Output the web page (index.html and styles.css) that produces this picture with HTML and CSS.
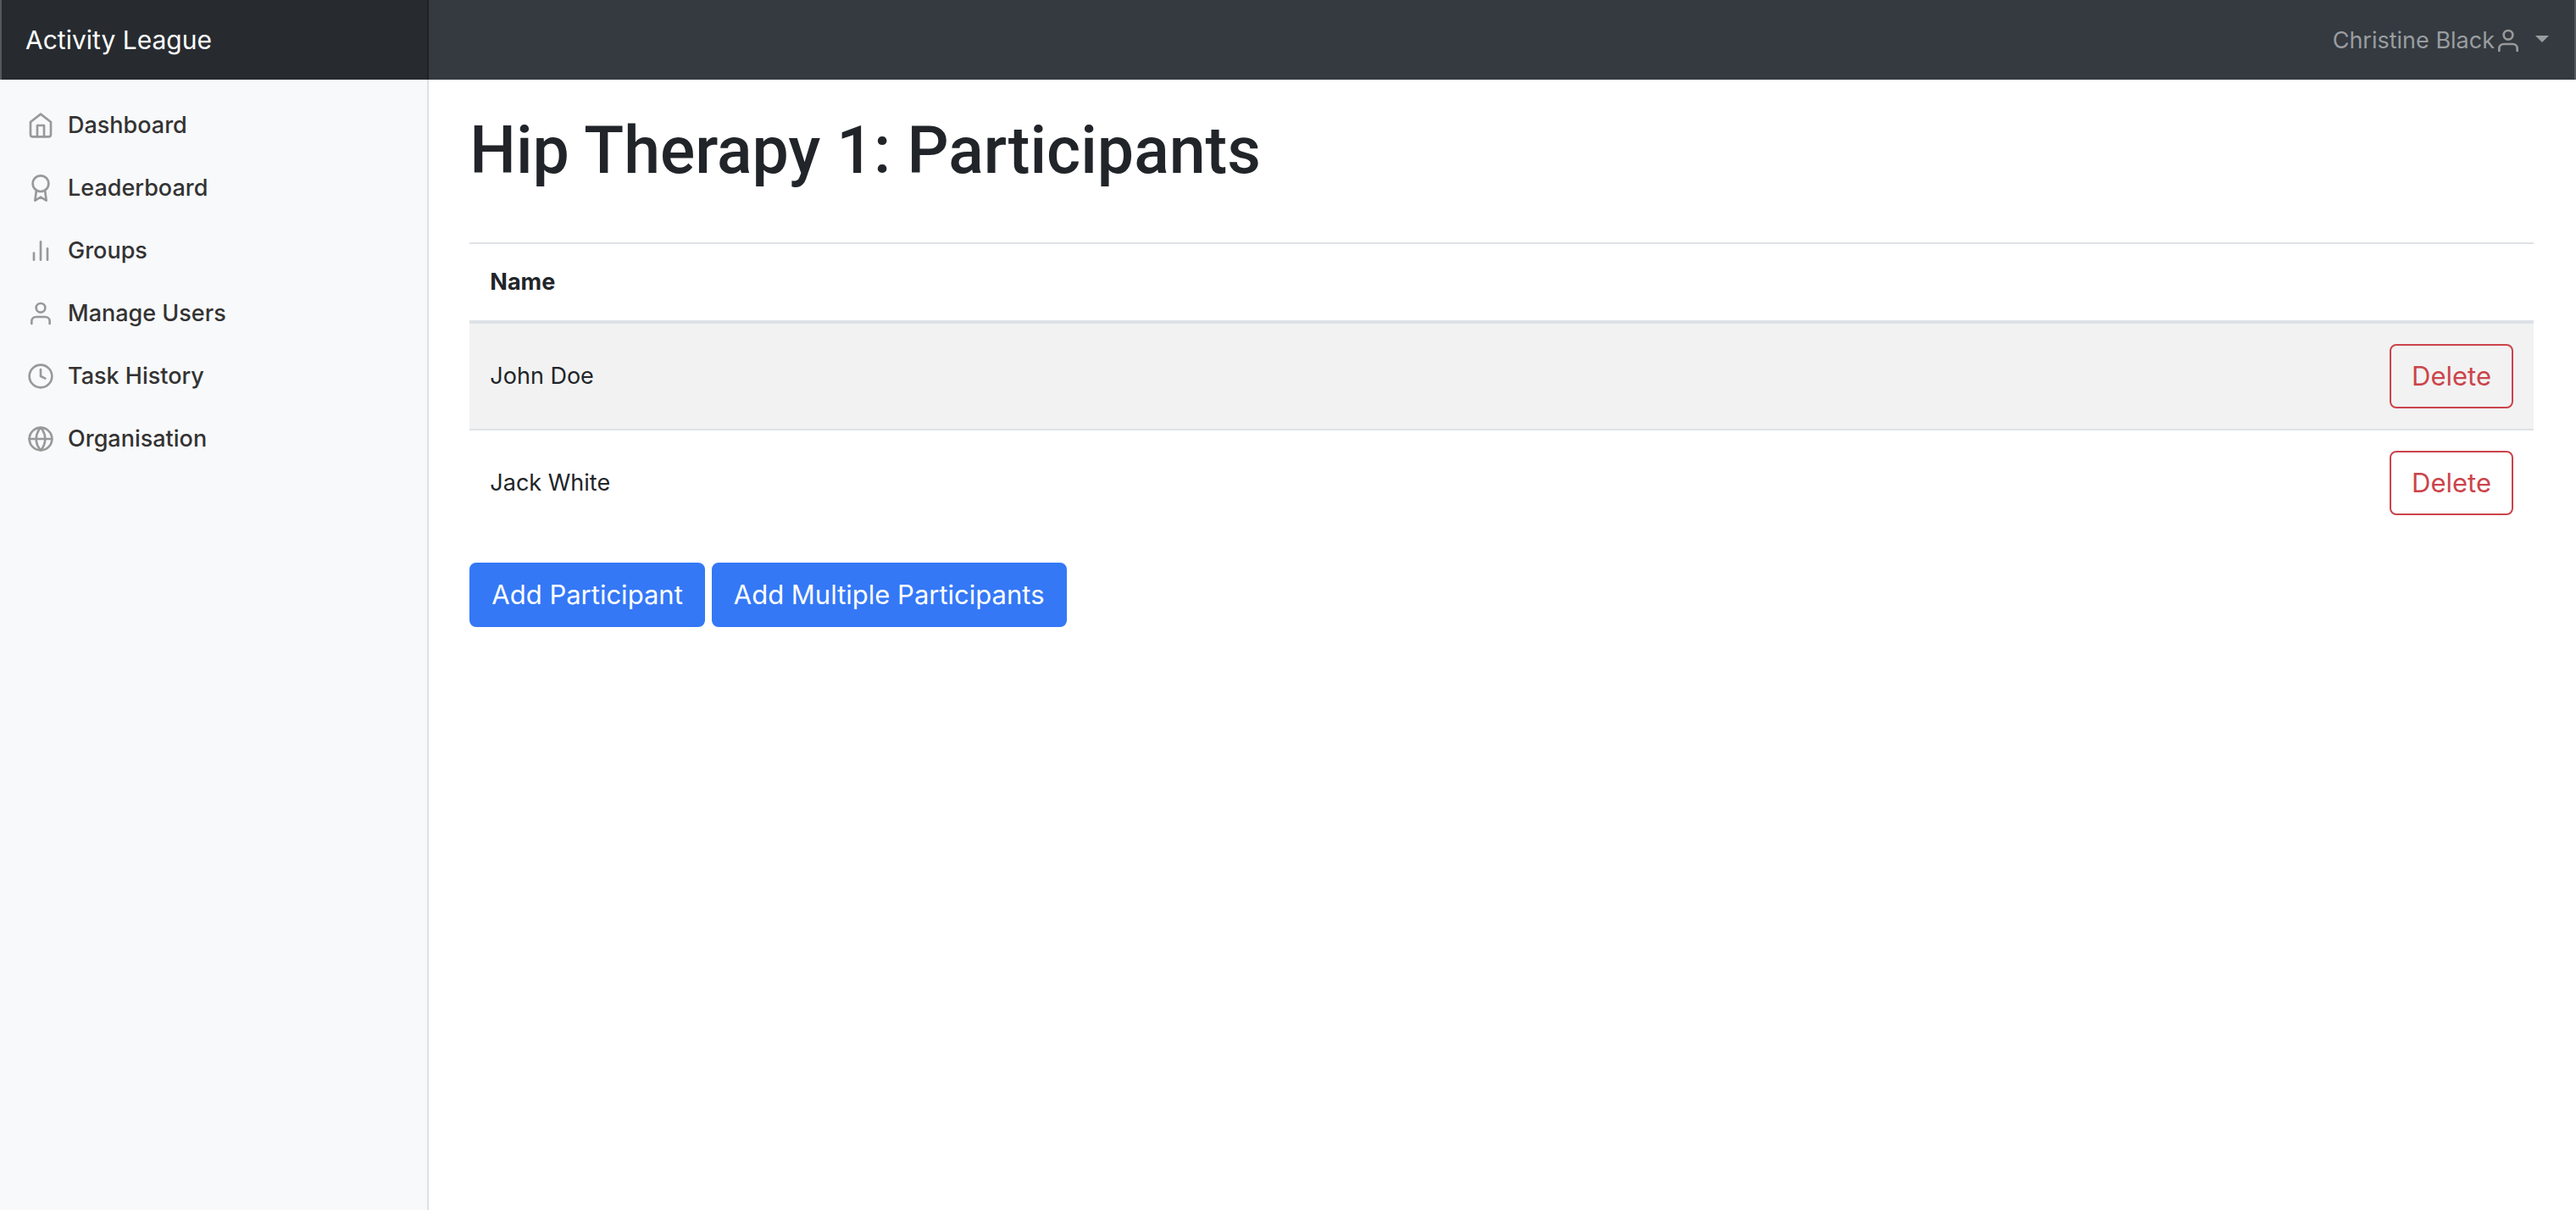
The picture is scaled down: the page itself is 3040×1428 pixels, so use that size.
FILE: index.html
```html
<!DOCTYPE html>
<html lang="en">
<head>
<meta charset="utf-8">
<meta name="viewport" content="width=device-width, initial-scale=1">
<title>Hip Therapy 1: Participants - Activity League</title>
<link rel="stylesheet" href="styles.css">
</head>
<body>
<header class="navbar">
  <a class="brand" href="#">Activity League</a>
  <button class="user-menu" type="button" aria-haspopup="true">
    <span>Christine Black</span>
    <svg class="icon" viewBox="0 0 24 24" aria-hidden="true"><path d="M20 21v-2a4 4 0 0 0-4-4H8a4 4 0 0 0-4 4v2"/><circle cx="12" cy="7" r="4"/></svg>
    <span class="caret"></span>
  </button>
</header>
<div class="layout">
  <nav class="sidebar" aria-label="Main">
    <a class="nav-link" href="#"><svg class="icon" viewBox="0 0 24 24" aria-hidden="true"><path d="M3 9l9-7 9 7v11a2 2 0 0 1-2 2H5a2 2 0 0 1-2-2z"/><path d="M9 22V12h6v10"/></svg>Dashboard</a>
    <a class="nav-link" href="#"><svg class="icon" viewBox="0 0 24 24" aria-hidden="true"><circle cx="12" cy="8" r="7"/><path d="M8.21 13.89L7 23l5-3 5 3-1.21-9.12"/></svg>Leaderboard</a>
    <a class="nav-link" href="#"><svg class="icon" viewBox="0 0 24 24" aria-hidden="true"><path d="M18 20V10M12 20V4M6 20v-6"/></svg>Groups</a>
    <a class="nav-link" href="#"><svg class="icon" viewBox="0 0 24 24" aria-hidden="true"><path d="M20 21v-2a4 4 0 0 0-4-4H8a4 4 0 0 0-4 4v2"/><circle cx="12" cy="7" r="4"/></svg>Manage Users</a>
    <a class="nav-link" href="#"><svg class="icon" viewBox="0 0 24 24" aria-hidden="true"><circle cx="12" cy="12" r="10"/><path d="M12 6v6l4 2"/></svg>Task History</a>
    <a class="nav-link" href="#"><svg class="icon" viewBox="0 0 24 24" aria-hidden="true"><circle cx="12" cy="12" r="10"/><path d="M2 12h20M12 2a15.3 15.3 0 0 1 4 10 15.3 15.3 0 0 1-4 10 15.3 15.3 0 0 1-4-10 15.3 15.3 0 0 1 4-10z"/></svg>Organisation</a>
  </nav>
  <main class="content">
    <h1 class="title">Hip Therapy 1: Participants</h1>
    <table class="table">
      <thead>
        <tr><th scope="col">Name</th><th class="action" aria-label="Actions"></th></tr>
      </thead>
      <tbody>
        <tr><td>John Doe</td><td class="action"><button class="btn btn-delete" type="button">Delete</button></td></tr>
        <tr><td>Jack White</td><td class="action"><button class="btn btn-delete" type="button">Delete</button></td></tr>
      </tbody>
    </table>
    <div class="buttons">
      <button class="btn btn-primary" type="button">Add Participant</button>
      <button class="btn btn-primary" type="button">Add Multiple Participants</button>
    </div>
  </main>
</div>
</body>
</html>
```
FILE: styles.css
```css
* {
  box-sizing: border-box;
}

body {
  margin: 0;
  min-height: 100vh;
  display: flex;
  flex-direction: column;
  background: #fff;
  color: #212529;
  font-family: Inter, "Liberation Sans", sans-serif;
  font-size: 27px;
  line-height: 42px;
}

.navbar {
  display: grid;
  grid-template-columns: 1fr 5fr;
  border-right: 2px solid #55595c;
  background: #343a40;
}

.brand {
  padding: 23px 28px;
  border-left: 2px solid #55595c;
  border-right: 2px solid #1f2225;
  background: #272b30;
  color: #fff;
  font-size: 30px;
  line-height: 48px;
  text-decoration: none;
}

.user-menu {
  display: flex;
  align-items: center;
  justify-self: end;
  padding: 2px 30px 0 0;
  border: 0;
  background: none;
  color: #9a9da0;
  font: inherit;
}

.icon {
  flex: none;
  width: 32px;
  height: 32px;
  fill: none;
  stroke: #999;
  stroke-width: 2;
  stroke-linecap: round;
  stroke-linejoin: round;
}

.caret {
  margin: 0 0 4px 16px;
  border-top: 8px solid;
  border-left: 8px solid transparent;
  border-right: 8px solid transparent;
}

.layout {
  flex: 1;
  display: grid;
  grid-template-columns: 1fr 5fr;
  padding-right: 2px;
}

.sidebar {
  padding-top: 17px;
  border-right: 2px solid #dfe0e1;
  background: #f8f9fa;
}

.nav-link {
  display: flex;
  align-items: center;
  gap: 16px;
  padding: 16px 32px;
  color: #333;
  font-weight: 500;
  text-decoration: none;
}

.content {
  padding: 36px 48px;
}

.title {
  margin: 0 0 60px;
  font-family: Roboto, Inter, sans-serif;
  font-size: 77px;
  font-weight: 500;
  line-height: 96px;
}

.table {
  width: 100%;
  margin-bottom: 32px;
  border-spacing: 0;
  border-top: 2px solid #dee2e6;
}

.table th,
.table td {
  padding: 24px;
  text-align: left;
}

.table th {
  border-bottom: 4px solid #dee2e6;
  font-weight: 700;
}

.table td {
  border-top: 2px solid #dee2e6;
}

.table tbody tr:first-child td {
  border-top: 0;
  background: #f2f2f2;
}

.table .action {
  padding-top: 0;
  padding-bottom: 0;
  text-align: right;
}

.table td:first-child {
  padding-top: 41px;
  padding-bottom: 41px;
}

.btn {
  padding: 12px 24px;
  border: 2px solid;
  border-radius: 8px;
  font: inherit;
  font-size: 31px;
  line-height: 48px;
  vertical-align: middle;
}

.btn-delete {
  border-color: #cb444a;
  background: transparent;
  color: #cb444a;
}

.btn-primary {
  border-color: #3478f6;
  background: #3478f6;
  color: #fff;
}

.buttons {
  display: flex;
  flex-wrap: wrap;
  gap: 8px;
}
```
